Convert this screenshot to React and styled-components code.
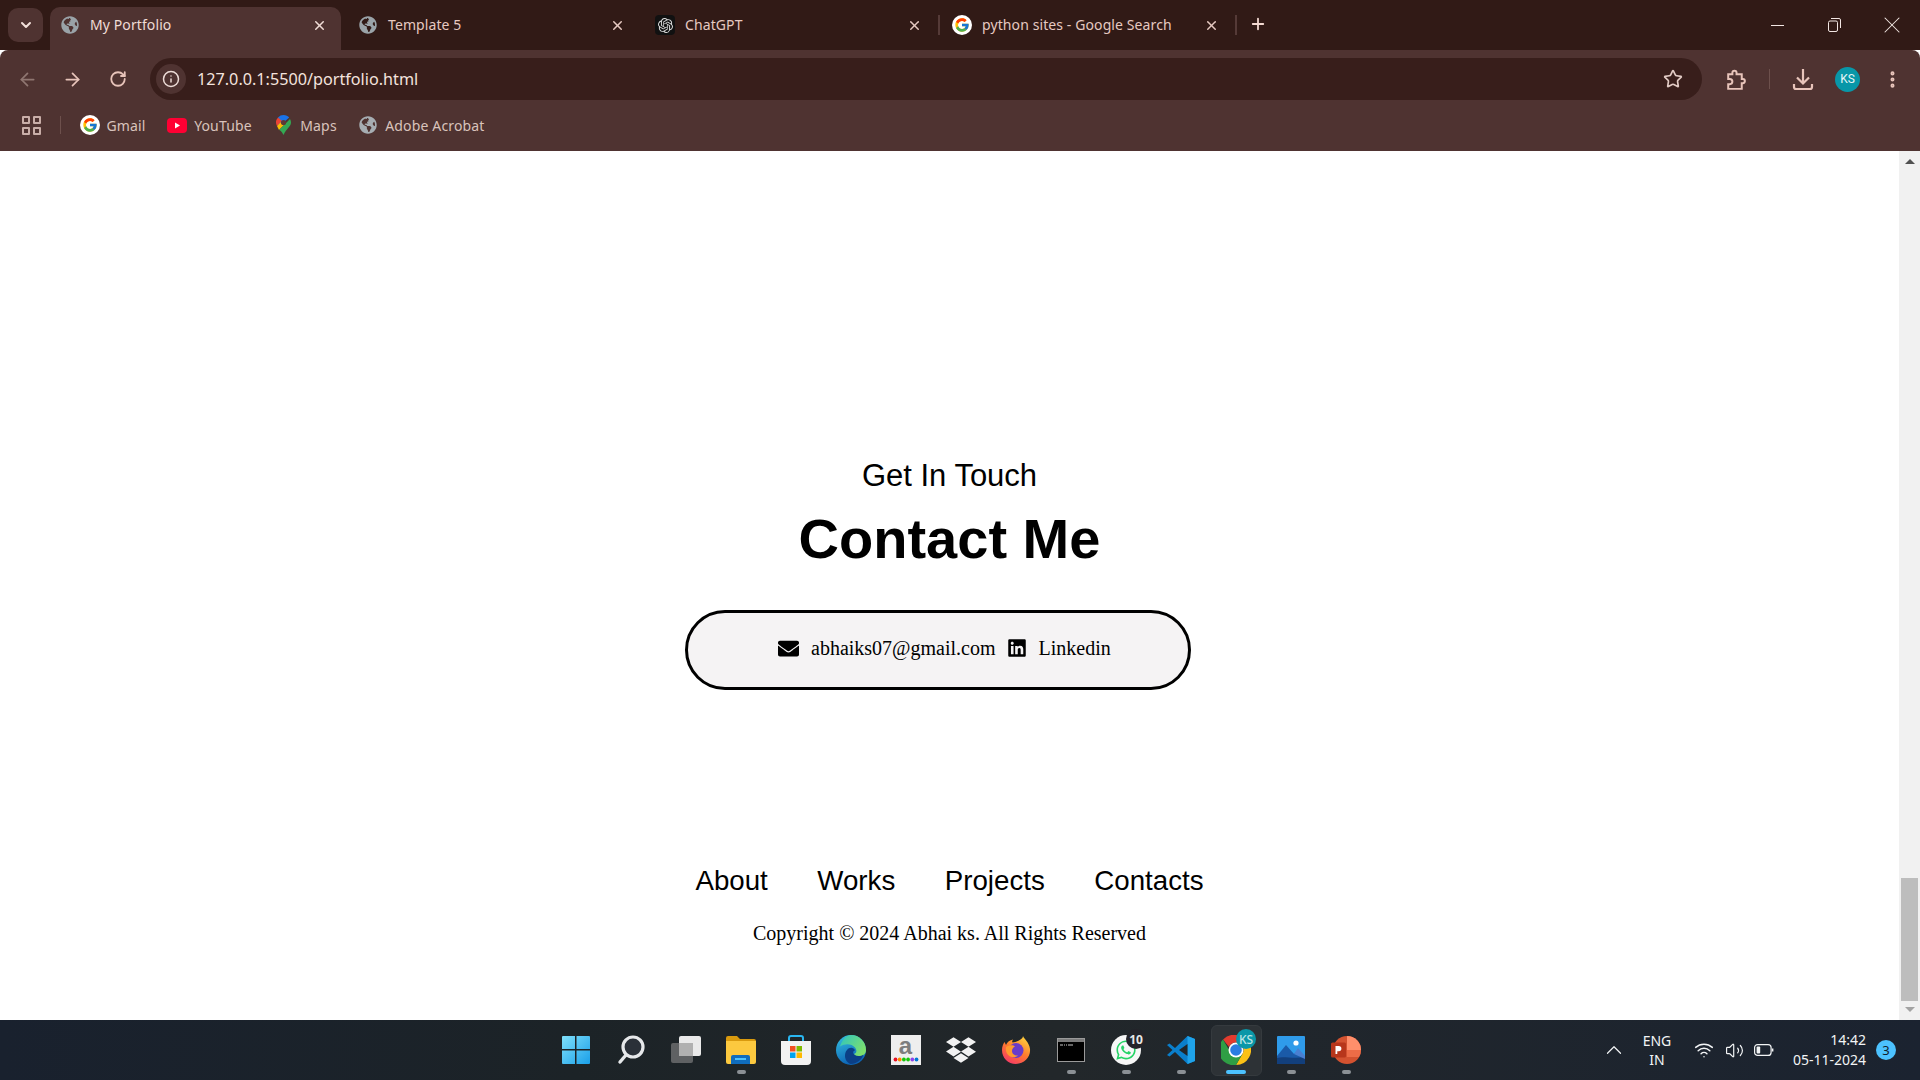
import styled, { createGlobalStyle } from 'styled-components'
import { ArrowLeft, ArrowRight, RotateCw, Info, Star, ChevronDown, ChevronUp, X, Plus, EllipsisVertical, Wifi, Volume2 } from 'lucide-react'
import { FaEnvelope, FaLinkedin, FaGlobeAmericas, FaDropbox, FaWhatsapp } from 'react-icons/fa'
import { FcGoogle } from 'react-icons/fc'
import { SiOpenai } from 'react-icons/si'

const GlobalStyle = createGlobalStyle`
	html, body {
		margin: 0;
		padding: 0;
		height: 100%;
		overflow: hidden;
		background: white;
	}
	* { box-sizing: border-box; }
`

const Screen = styled.div`
	display: flex;
	flex-direction: column;
	width: 1920px;
	height: 1080px;
	overflow: hidden;
	font-family: "Noto Sans", sans-serif;
`

/* tab strip */
const TabStrip = styled.div`
	display: flex;
	align-items: flex-end;
	height: 50px;
	padding-left: 8px;
	background: #311a16;
	flex: none;
`

const TabMenu = styled.div`
	display: flex;
	align-items: center;
	justify-content: center;
	width: 35px;
	height: 34px;
	margin: 0 7px 8px 0;
	border-radius: 10px;
	background: #4f3331;
	color: #f3e0da;
`

const Tab = styled.div`
	position: relative;
	display: flex;
	align-items: center;
	flex: none;
	width: ${props => props.$active ? '291px' : '297px'};
	height: ${props => props.$active ? '43px' : '36px'};
	margin: ${props => props.$active ? '0 4px 0 0' : '0 0 7px 0'};
	padding: ${props => props.$active ? '0 14px 7px 10px' : '0 17px 0 13px'};
	border-radius: 10px 10px 0 0;
	background: ${props => props.$active ? '#4f3331' : 'transparent'};
	color: ${props => props.$active ? '#f0dcd6' : '#e6c9c1'};

	&::after {
		content: "";
		display: ${props => props.$sep ? 'block' : 'none'};
		position: absolute;
		right: -1px;
		top: 8px;
		width: 2px;
		height: 20px;
		background: #553a37;
	}
`

const Favicon = styled.span`
	display: flex;
	align-items: center;
	justify-content: center;
	width: 20px;
	height: 20px;
	margin-right: 10px;
	flex: none;
	border-radius: ${props => props.$tile ? '4px' : '50%'};
	background: ${props => props.$bg || 'transparent'};
	color: ${props => props.$color || '#9aa3a8'};
`

const TabTitle = styled.span`
	font-size: 14px;
	line-height: 20px;
	letter-spacing: 0.1px;
	white-space: nowrap;
`

const TabClose = styled.span`
	display: flex;
	margin-left: auto;
	color: inherit;
`

const NewTab = styled.div`
	display: flex;
	margin: 0 0 17px 13px;
	color: #f3d9d1;
`

const WindowControls = styled.div`
	display: flex;
	margin-left: auto;
	align-self: flex-start;
	color: #f2e6e3;
`

const WindowButton = styled.div`
	display: flex;
	align-items: center;
	justify-content: center;
	width: 57px;
	height: 50px;
`

const MinLine = styled.div`
	width: 13px;
	height: 1px;
	background: #f2e6e3;
`

/* toolbar */
const Toolbar = styled.div`
	display: flex;
	flex-direction: column;
	height: 101px;
	flex: none;
	background: #4f3331;
	border-radius: 8px 8px 0 0;
`

const NavRow = styled.div`
	display: flex;
	align-items: flex-start;
	height: 54px;
	padding: 8px 0 0 5px;
`

const ToolIcon = styled.div`
	display: flex;
	align-items: center;
	justify-content: center;
	width: 45px;
	height: 42px;
	color: ${props => props.$dim ? '#8f7671' : '#e8c4ba'};
`

const Omnibox = styled.div`
	display: flex;
	align-items: center;
	width: 1552px;
	height: 42px;
	margin: 0 11px 0 10px;
	padding: 0 6px;
	border-radius: 21px;
	background: #381e1b;
`

const InfoChip = styled.div`
	display: flex;
	align-items: center;
	justify-content: center;
	width: 30px;
	height: 30px;
	border-radius: 50%;
	background: #4f3331;
	color: #eddcd7;
`

const Url = styled.span`
	margin-left: 11px;
	font-size: 16.2px;
	color: #f4e3de;
`

const StarSlot = styled.div`
	display: flex;
	margin: 0 13px 0 auto;
	color: #e2cbc5;
`

const ToolSep = styled.div`
	width: 1px;
	height: 20px;
	margin: 11px 10px 0 11px;
	background: #6d504c;
`

const Avatar = styled.div`
	display: flex;
	align-items: center;
	justify-content: center;
	width: 25px;
	height: 25px;
	border-radius: 50%;
	background: #0897a8;
	color: #e6f6f7;
	font-family: "Roboto", sans-serif;
	font-size: 12px;
`

const BookmarkRow = styled.div`
	display: flex;
	align-items: center;
	height: 42px;
	padding-left: 22px;
	gap: 21.5px;
	color: #d9c3bc;
`

const AppsIcon = styled.div`
	display: grid;
	grid-template-columns: 8px 8px;
	gap: 3px;

	span {
		width: 8px;
		height: 8px;
		border: 2px solid #c9aea8;
		border-radius: 1px;
	}
`

const BookmarkSep = styled.div`
	width: 1px;
	height: 18px;
	margin: 0 -3px 0 -2.5px;
	background: #6d504c;
`

const Bookmark = styled.div`
	display: flex;
	align-items: center;
	gap: 7px;
	font-size: 14px;
	letter-spacing: 0.15px;
	white-space: nowrap;
`

const BookmarkIcon = styled.span`
	display: flex;
	align-items: center;
	justify-content: center;
	width: 20px;
	height: 20px;
	border-radius: 50%;
	background: ${props => props.$bg || 'transparent'};
	color: #a6adb2;
`

/* page */
const Viewport = styled.div`
	display: flex;
	flex: 1;
	min-height: 0;
	background: white;
`

const Main = styled.main`
	display: flex;
	flex-direction: column;
	align-items: center;
	flex: 1;
	padding-top: 308px;
	color: black;
`

const Subtitle = styled.h3`
	margin: 0;
	font-family: "Liberation Sans", Arial, sans-serif;
	font-size: 31px;
	line-height: 34px;
	font-weight: normal;
`

const Title = styled.h1`
	margin: 14px 0 39px;
	font-family: "Liberation Sans", Arial, sans-serif;
	font-size: 56px;
	line-height: 64px;
	font-weight: bold;
`

const ContactPill = styled.div`
	display: flex;
	align-items: center;
	width: 506px;
	height: 80px;
	margin-right: 23px;
	padding: 0 0 4px 90px;
	border: 3px solid black;
	border-radius: 40px;
	background: #f5f3f4;
	font-family: "Liberation Serif", "Times New Roman", serif;
	font-size: 20px;
`

const ContactLink = styled.span`
	display: flex;
	align-items: center;
	gap: 12px;
	margin-right: 11px;
	line-height: 22px;
`

const FooterNav = styled.nav`
	display: flex;
	gap: 49.5px;
	margin-top: 175px;
	font-family: "Liberation Sans", Arial, sans-serif;
	font-size: 27.7px;
	line-height: 32px;
`

const Copyright = styled.p`
	margin: 25px 0 0;
	font-family: "Liberation Serif", "Times New Roman", serif;
	font-size: 20px;
	line-height: 23px;
`

const Scrollbar = styled.div`
	display: flex;
	flex-direction: column;
	align-items: center;
	width: 21px;
	padding: 8px 0;
	background: #f1f1f1;
`

const ScrollArrow = styled.div`
	width: 0;
	height: 0;
	border-left: 5px solid transparent;
	border-right: 5px solid transparent;
	border-top: ${props => props.$down ? '5px solid #a3a3a3' : 'none'};
	border-bottom: ${props => props.$down ? 'none' : '5px solid #505050'};
`

const ScrollThumb = styled.div`
	width: 17px;
	height: 123px;
	margin: auto 0 6px;
	background: #bdbdbd;
`

/* taskbar */
const Taskbar = styled.div`
	display: flex;
	align-items: center;
	height: 60px;
	flex: none;
	padding-left: 548px;
	background: linear-gradient(90deg, #19212e 0%, #1c2327 30%, #22272a 55%, #1b2330 100%);
	color: #f2f4f5;
`

const TaskCell = styled.div`
	position: relative;
	display: flex;
	align-items: center;
	justify-content: center;
	width: 55px;
	height: 60px;

	&::before {
		content: "";
		display: ${props => props.$active ? 'block' : 'none'};
		position: absolute;
		left: 3px;
		top: 5px;
		width: 49px;
		height: 49px;
		border-radius: 6px;
		background: #2d3236;
		border: 1px solid #353a3e;
	}

	svg {
		position: relative;
	}
`

const RunDot = styled.div`
	position: absolute;
	left: 50%;
	top: 50px;
	width: ${props => props.$active ? '20px' : '9px'};
	height: 4px;
	margin-left: ${props => props.$active ? '-10px' : '-4px'};
	border-radius: 2px;
	background: ${props => props.$active ? '#4cc2ff' : '#8b9095'};
`

const Badge = styled.div`
	position: absolute;
	left: 28px;
	top: 9px;
	display: flex;
	align-items: center;
	justify-content: center;
	width: 20px;
	height: 20px;
	border-radius: 50%;
	background: ${props => props.$bg};
	color: ${props => props.$color};
	font-size: 12px;
	font-weight: ${props => props.$bold ? 700 : 500};
`

const Tray = styled.div`
	display: flex;
	align-items: center;
	margin-left: auto;
	padding-right: 24px;
	height: 100%;
`

const TrayCell = styled.div`
	display: flex;
	align-items: center;
	justify-content: center;
	width: ${props => props.$w};
`

const LangText = styled.div`
	margin: 0 4px 0 0;
	width: 56px;
	text-align: center;
	font-size: 14px;
	line-height: 19px;
`

const Clock = styled.div`
	margin: 0 10px 0 11px;
	width: 76px;
	text-align: right;
	font-size: 14px;
	line-height: 20px;
	white-space: nowrap;
`

const NotifyBadge = styled.div`
	display: flex;
	align-items: center;
	justify-content: center;
	width: 20px;
	height: 20px;
	border-radius: 50%;
	background: #4cc2ff;
	color: #10202c;
	font-size: 13px;
`

const PuzzleIcon = () => (
	<svg width="25" height="25" viewBox="0 0 24 24" fill="none" stroke="currentColor" strokeWidth="1.9">
		<path d="M5 7h4V5.5a2 2 0 0 1 4 0V7h5v4.5h1a2 2 0 0 1 0 4h-1V21H5v-4.5h1.5a2.5 2.5 0 0 0 0-5H5z" />
	</svg>
)

const DownloadIcon = () => (
	<svg width="22" height="24" viewBox="0 0 22 24" fill="none" stroke="currentColor" strokeWidth="2.2">
		<path d="M11 2v14M5 10.5l6 6 6-6M2 17v3a2 2 0 0 0 2 2h14a2 2 0 0 0 2-2v-3" />
	</svg>
)

const RestoreIcon = () => (
	<svg width="13" height="14" viewBox="0 0 13 14" fill="none" stroke="currentColor" strokeWidth="1">
		<rect x="0.5" y="3" width="9" height="10.5" rx="1.5" />
		<path d="M3 .5h8a1.5 1.5 0 0 1 1.5 1.5v8" />
	</svg>
)

const BatteryIcon = () => (
	<svg width="20" height="14" viewBox="0 0 20 14" fill="none" stroke="#f2f4f5" strokeWidth="1.2">
		<rect x="0.6" y="1.6" width="16.5" height="10.8" rx="3" />
		<rect x="2.6" y="3.6" width="3.6" height="6.8" rx="1" fill="#f2f4f5" stroke="none" />
		<path d="M18.6 5.5v3" strokeWidth="1.6" />
	</svg>
)

const MapsPin = () => (
	<svg width="15" height="20" viewBox="0 0 15 20">
		<path d="M2 2.4A7.5 7.5 0 0 1 7.5 0C10 0 12 1 13.2 2.6L2.3 12z" fill="#1a73e8" />
		<path d="M2 2.4 6 6 1 11A7.5 7.5 0 0 1 2 2.4z" fill="#ea4335" />
		<path d="M1 11l5-5 3 3-6 6z" fill="#fbbc04" />
		<path d="M15 7.5c0 4-4.5 6-7.5 12.5C6 17 4 14.5 3 15l6-6 5-5c.7 1 1 2.2 1 3.5z" fill="#34a853" />
		<circle cx="7.5" cy="7.5" r="2.6" fill="#5d3a35" />
	</svg>
)

const YoutubeIcon = () => (
	<svg width="20" height="15" viewBox="0 0 20 15">
		<rect width="20" height="15" rx="4" fill="#ff0033" />
		<path d="M8 4.5v6l5-3z" fill="white" />
	</svg>
)

const WinLogo = () => (
	<svg width="30" height="30" viewBox="0 0 30 30">
		<defs>
			<linearGradient id="winA" x1="0" y1="0" x2="1" y2="1">
				<stop offset="0" stopColor="#7fe0fb" />
				<stop offset="1" stopColor="#1a9fe8" />
			</linearGradient>
		</defs>
		<path d="M1 2a1 1 0 0 1 1-1h12v13H1zM15.5 1H28a1 1 0 0 1 1 1v12H15.5zM1 15.5h13V29H2a1 1 0 0 1-1-1zM15.5 15.5H29V28a1 1 0 0 1-1 1H15.5z" fill="url(#winA)" />
	</svg>
)

const SearchGlyph = () => (
	<svg width="28" height="30" viewBox="0 0 28 30">
		<circle cx="16" cy="12" r="10" fill="#2a3038" stroke="#e6e8ea" strokeWidth="3.2" />
		<path d="M9 20l-6 7" stroke="#e6e8ea" strokeWidth="3.4" strokeLinecap="round" />
	</svg>
)

const TaskView = () => (
	<svg width="30" height="28" viewBox="0 0 30 28">
		<rect x="0" y="7" width="22" height="20" rx="2" fill="#5f6163" />
		<rect x="8" y="0" width="22" height="20" rx="2" fill="#e9e9e9" />
		<rect x="8" y="7" width="14" height="13" fill="#b0b0b0" />
	</svg>
)

const FolderIcon = () => (
	<svg width="30" height="28" viewBox="0 0 30 28">
		<path d="M0 2a2 2 0 0 1 2-2h9l3 3h14a2 2 0 0 1 2 2v6H0z" fill="#d99a0e" />
		<path d="M0 5h30v21a2 2 0 0 1-2 2H2a2 2 0 0 1-2-2z" fill="#fcc93f" />
		<path d="M5 21a2 2 0 0 1 2-2h15a2 2 0 0 1 2 2v7H5z" fill="#0f6cbd" />
		<rect x="9" y="22" width="11" height="2" fill="#4cc2ff" />
	</svg>
)

const StoreIcon = () => (
	<svg width="30" height="30" viewBox="0 0 30 30">
		<path d="M8 6V3a2 2 0 0 1 2-2h10a2 2 0 0 1 2 2v3" fill="none" stroke="#29b6f0" strokeWidth="2" />
		<path d="M0 6h30v20a4 4 0 0 1-4 4H4a4 4 0 0 1-4-4z" fill="#f2f2f2" />
		<rect x="9" y="11" width="5.5" height="5.5" fill="#f25022" />
		<rect x="15.5" y="11" width="5.5" height="5.5" fill="#7fba00" />
		<rect x="9" y="17.5" width="5.5" height="5.5" fill="#00a4ef" />
		<rect x="15.5" y="17.5" width="5.5" height="5.5" fill="#ffb900" />
	</svg>
)

const EdgeIcon = () => (
	<svg width="30" height="30" viewBox="0 0 30 30">
		<defs>
			<linearGradient id="edgeA" x1="0" y1="0" x2="0.4" y2="1">
				<stop offset="0" stopColor="#35c1e1" />
				<stop offset="1" stopColor="#0c63b5" />
			</linearGradient>
			<linearGradient id="edgeB" x1="0" y1="0" x2="1" y2="0.6">
				<stop offset="0" stopColor="#2fc4c0" />
				<stop offset="1" stopColor="#7ee06c" />
			</linearGradient>
		</defs>
		<circle cx="15" cy="15" r="15" fill="url(#edgeA)" />
		<path d="M15 0a15 15 0 0 1 15 15c0 4-3 6.5-7 6.5-3 0-5-1-5-2.5 3-1 3-4 1-6.5C16 8.5 9 8 4 11.5 6 5 10 0 15 0z" fill="url(#edgeB)" />
		<path d="M11 15c2-3 7-3 8 .5-3 .5-2.5 5 3.5 5.500 2 0 3.500-.5 5-1.500-2 6-7 9-12.500 9.500-3-.5-6-4-6-8 0-2.500.5-4.500 2-6z" fill="#0b3f86" />
	</svg>
)

const AmazonTile = styled.div`
	display: flex;
	flex-direction: column;
	align-items: center;
	width: 30px;
	height: 30px;
	background: #eeeeee;
	color: #7d7d7d;
	font-family: "Liberation Sans", sans-serif;
	font-size: 24px;
	font-weight: bold;
	line-height: 22px;
`

const AmazonDots = () => (
	<svg width="26" height="5" viewBox="0 0 26 5">
		{['#e81123', '#ff8c00', '#16c60c', '#16c60c', '#8e44ec', '#0078d4'].map((c, i) => (
			<circle key={i} cx={2.5 + i * 4.2} cy="2.5" r="1.9" fill={c} />
		))}
	</svg>
)

const FirefoxIcon = () => (
	<svg width="30" height="30" viewBox="0 0 30 30">
		<defs>
			<linearGradient id="foxA" x1="0.8" y1="0" x2="0.2" y2="1">
				<stop offset="0" stopColor="#ffd53d" />
				<stop offset="0.5" stopColor="#ff7a2e" />
				<stop offset="1" stopColor="#f5356a" />
			</linearGradient>
		</defs>
		<path d="M22 1c1 3 6 6 7 13 .8 8-5.5 15-14 15C7 29 1 23 1 15c0-3 1-6 2.5-8l1.5 3c1-3 4-5 7-5.5-1 1.5-1 2.5-.5 3 3-.5 6-1.5 8-3 1.5-1 2.5-2 2.5-3.5z" fill="url(#foxA)" />
		<circle cx="15" cy="15.5" r="7.5" fill="#6a3bc8" />
		<path d="M5 12c3-2 7-2.5 9-.5-2 1-3 2.5-3 4.5 0 3 3 5 6 4.5-3 3-9 2-11-2-1-2-1.5-4.5-1-6.5z" fill="#ff9a2e" />
	</svg>
)

const TerminalIcon = () => (
	<svg width="28" height="24" viewBox="0 0 28 24">
		<rect x="0.5" y="0.5" width="27" height="23" fill="#000" stroke="#9a9a9a" />
		<rect x="1" y="1" width="26" height="3" fill="#7c7c7c" />
		<path d="M3 7h3M7 7h1M9 7h1M11 7h5" stroke="#c8c8c8" strokeWidth="1.2" />
	</svg>
)

const WhatsappTile = () => (
	<svg width="30" height="30" viewBox="0 0 30 30">
		<circle cx="15" cy="15" r="15" fill="#f7f7f7" />
		<foreignObject x="4" y="4" width="22" height="22">
			<FaWhatsapp size={22} color="#25d366" />
		</foreignObject>
	</svg>
)

const VsCodeIcon = () => (
	<svg width="30" height="30" viewBox="0 0 30 30">
		<path d="M21.5 1L9 13 3.5 8.5 1 10l5.5 5L1 20l2.5 1.5L9 17l12.5 12L29 26V4z" fill="#0a7fcc" />
		<path d="M21.5 1L29 4v22l-7.5 3z" fill="#1fa3ea" />
		<path d="M21.5 9v12L13 15z" fill="#20262a" />
	</svg>
)

const ChromeIcon = () => (
	<svg width="30" height="30" viewBox="0 0 30 30">
		<path d="M15 0a15 15 0 0 1 13 7.5H15a7.5 7.5 0 0 0-7 4.5L2 4.5A15 15 0 0 1 15 0z" fill="#e33b2e" />
		<path d="M28 7.5A15 15 0 0 1 15 30l6.5-11.3A7.5 7.5 0 0 0 21.5 11z" fill="#fbc116" />
		<path d="M2 4.5l6.5 11.2A7.5 7.5 0 0 0 21.5 18.7L15 30A15 15 0 0 1 2 4.5z" fill="#2f9e44" />
		<circle cx="15" cy="15" r="7.5" fill="white" />
		<circle cx="15" cy="15" r="5.8" fill="#2a7de1" />
	</svg>
)

const PhotosIcon = () => (
	<svg width="28" height="28" viewBox="0 0 28 28">
		<rect width="28" height="28" rx="1" fill="#2f9bea" />
		<circle cx="19" cy="7" r="2.6" fill="white" />
		<path d="M0 20l9-11 8 9 4-4 7 7v7H0z" fill="#1a5aa8" />
		<path d="M0 22c6-2 16 1 28-1v7H0z" fill="#123f7c" />
		<path d="M17 18l4-6 7 8v3z" fill="#4a7fd1" />
	</svg>
)

const PptIcon = () => (
	<svg width="30" height="30" viewBox="0 0 30 30">
		<circle cx="16" cy="15" r="14" fill="#d35230" />
		<path d="M16 1a14 14 0 0 1 14 14H16z" fill="#ff8f6b" />
		<path d="M30 15a14 14 0 0 1-2 7H16v-7z" fill="#ed6c47" />
		<rect x="0" y="7.5" width="15" height="15" rx="1.5" fill="#b7361b" />
		<path d="M4.5 19V11h3.3a2.5 2.5 0 0 1 0 5.2H6.3V19z" fill="white" />
	</svg>
)

const tabs = [
	{ title: 'My Portfolio', active: true, icon: <Favicon><FaGlobeAmericas size={18} /></Favicon> },
	{ title: 'Template 5', icon: <Favicon><FaGlobeAmericas size={18} /></Favicon> },
	{ title: 'ChatGPT', sep: true, icon: <Favicon $tile $bg="#111" $color="#ddd"><SiOpenai size={15} /></Favicon> },
	{ title: 'python sites - Google Search', sep: true, icon: <Favicon $bg="white"><FcGoogle size={16} /></Favicon> },
]

const taskItems = [
	{ icon: <WinLogo /> },
	{ icon: <SearchGlyph /> },
	{ icon: <TaskView /> },
	{ icon: <FolderIcon />, run: true },
	{ icon: <StoreIcon /> },
	{ icon: <EdgeIcon /> },
	{ icon: <AmazonTile>a<AmazonDots /></AmazonTile> },
	{ icon: <FaDropbox size={30} color="#f2f2f2" /> },
	{ icon: <FirefoxIcon /> },
	{ icon: <TerminalIcon />, run: true },
	{ icon: <WhatsappTile />, run: true, badge: <Badge $bg="#24242a" $color="#e8e8e8" $bold>10</Badge> },
	{ icon: <VsCodeIcon />, run: true },
	{ icon: <ChromeIcon />, run: true, active: true, badge: <Badge $bg="#0a97a8" $color="#b9e4e6">KS</Badge> },
	{ icon: <PhotosIcon />, run: true },
	{ icon: <PptIcon />, run: true },
]

export default function App() {
	return (
		<Screen>
			<GlobalStyle />
			<TabStrip>
				<TabMenu><ChevronDown size={16} strokeWidth={3} /></TabMenu>
				{tabs.map(t => (
					<Tab key={t.title} $active={t.active} $sep={t.sep}>
						{t.icon}
						<TabTitle>{t.title}</TabTitle>
						<TabClose><X size={15} strokeWidth={2.4} /></TabClose>
					</Tab>
				))}
				<NewTab><Plus size={18} strokeWidth={2.4} /></NewTab>
				<WindowControls>
					<WindowButton><MinLine /></WindowButton>
					<WindowButton><RestoreIcon /></WindowButton>
					<WindowButton><X size={28} strokeWidth={0.9} /></WindowButton>
				</WindowControls>
			</TabStrip>
			<Toolbar>
				<NavRow>
					<ToolIcon $dim><ArrowLeft size={21} /></ToolIcon>
					<ToolIcon><ArrowRight size={21} /></ToolIcon>
					<ToolIcon><RotateCw size={18} strokeWidth={2.4} /></ToolIcon>
					<Omnibox>
						<InfoChip><Info size={18} /></InfoChip>
						<Url>127.0.0.1:5500/portfolio.html</Url>
						<StarSlot><Star size={20} strokeWidth={2} /></StarSlot>
					</Omnibox>
					<ToolIcon><PuzzleIcon /></ToolIcon>
					<ToolSep />
					<ToolIcon><DownloadIcon /></ToolIcon>
					<ToolIcon><Avatar>KS</Avatar></ToolIcon>
					<ToolIcon><EllipsisVertical size={21} strokeWidth={2.6} /></ToolIcon>
				</NavRow>
				<BookmarkRow>
					<AppsIcon><span /><span /><span /><span /></AppsIcon>
					<BookmarkSep />
					<Bookmark><BookmarkIcon $bg="white"><FcGoogle size={16} /></BookmarkIcon>Gmail</Bookmark>
					<Bookmark><BookmarkIcon><YoutubeIcon /></BookmarkIcon>YouTube</Bookmark>
					<Bookmark><BookmarkIcon><MapsPin /></BookmarkIcon>Maps</Bookmark>
					<Bookmark><BookmarkIcon><FaGlobeAmericas size={18} /></BookmarkIcon>Adobe Acrobat</Bookmark>
				</BookmarkRow>
			</Toolbar>
			<Viewport>
				<Main>
					<Subtitle>Get In Touch</Subtitle>
					<Title>Contact Me</Title>
					<ContactPill>
						<ContactLink><FaEnvelope size={21} />abhaiks07@gmail.com</ContactLink>
						<ContactLink><FaLinkedin size={20} />Linkedin</ContactLink>
					</ContactPill>
					<FooterNav>
						<span>About</span>
						<span>Works</span>
						<span>Projects</span>
						<span>Contacts</span>
					</FooterNav>
					<Copyright>Copyright © 2024 Abhai ks. All Rights Reserved</Copyright>
				</Main>
				<Scrollbar>
					<ScrollArrow />
					<ScrollThumb />
					<ScrollArrow $down />
				</Scrollbar>
			</Viewport>
			<Taskbar>
				{taskItems.map((item, i) => (
					<TaskCell key={i} $active={item.active}>
						{item.icon}
						{item.badge}
						{item.run && <RunDot $active={item.active} />}
					</TaskCell>
				))}
				<Tray>
					<TrayCell $w="30px"><ChevronUp size={26} strokeWidth={1.1} /></TrayCell>
					<LangText>ENG<br />IN</LangText>
					<TrayCell $w="30px"><Wifi size={20} strokeWidth={1.8} /></TrayCell>
					<TrayCell $w="30px"><Volume2 size={19} strokeWidth={1.5} /></TrayCell>
					<TrayCell $w="30px"><BatteryIcon /></TrayCell>
					<Clock>14:42<br />05-11-2024</Clock>
					<NotifyBadge>3</NotifyBadge>
				</Tray>
			</Taskbar>
		</Screen>
	)
}
